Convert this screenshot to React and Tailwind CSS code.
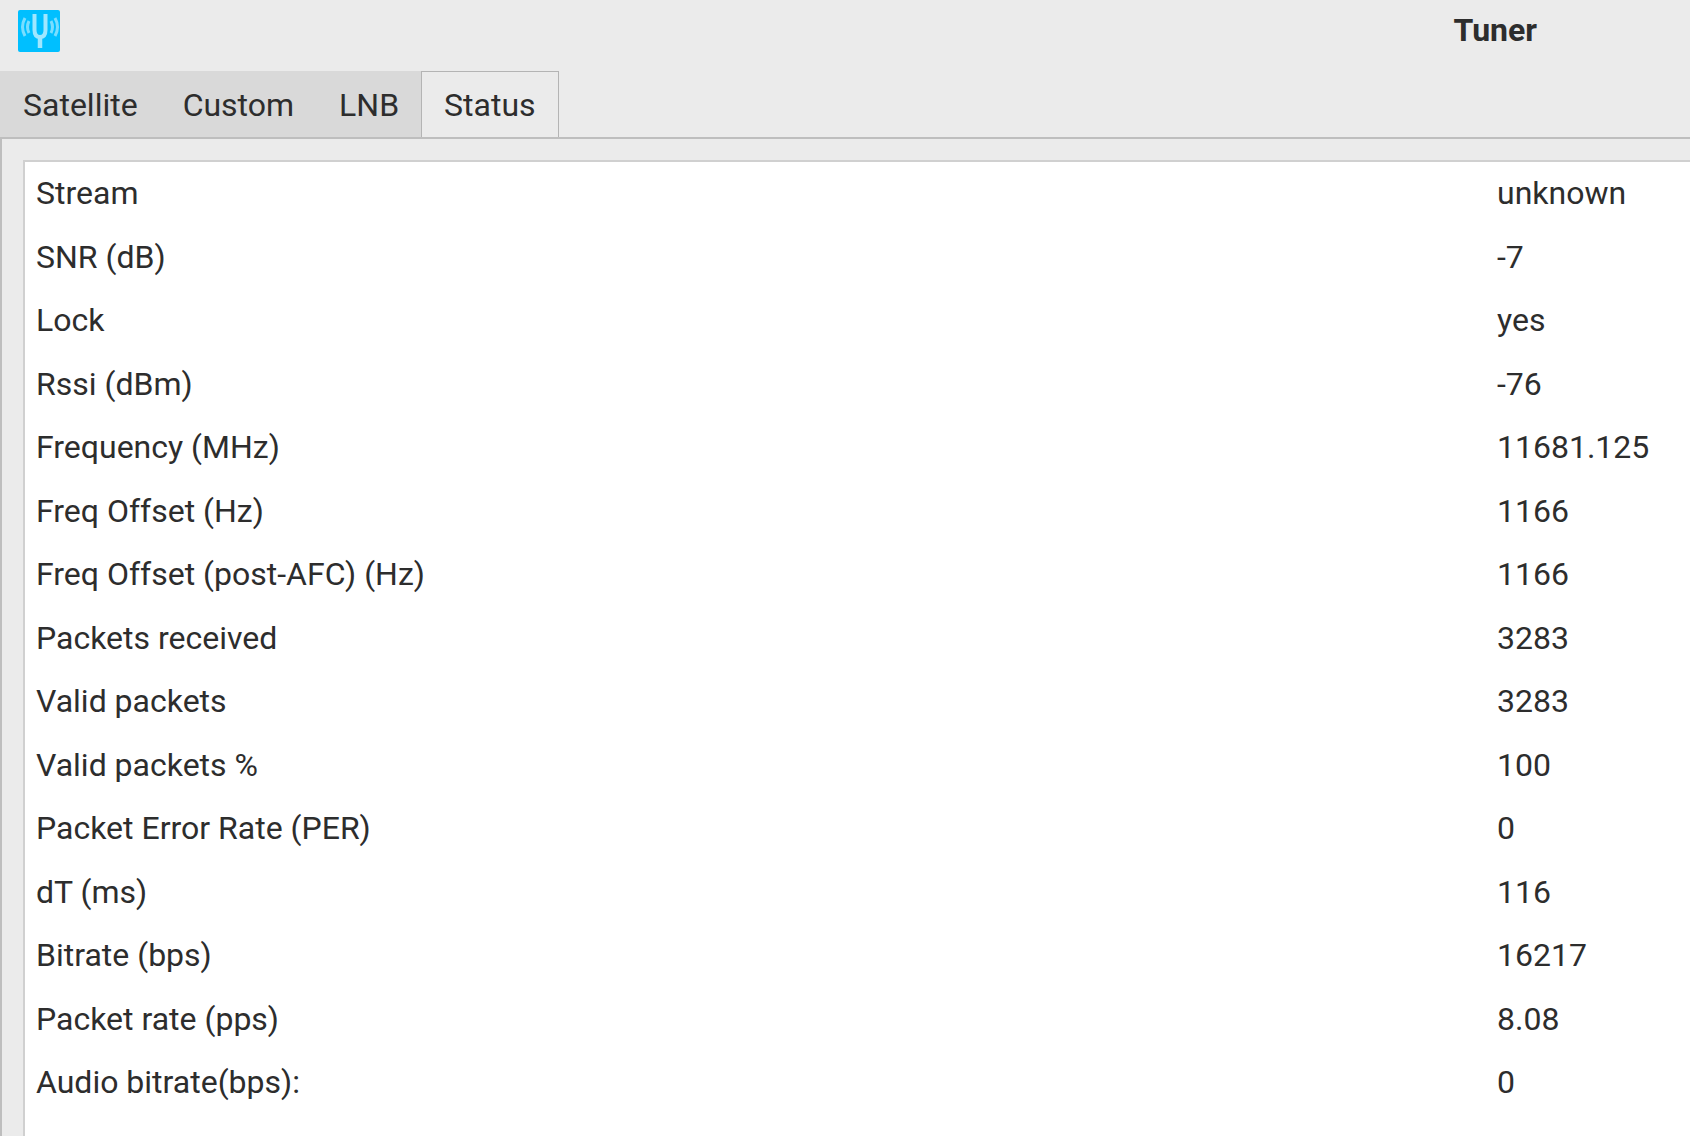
import React, { useState } from 'react';

const tabs = ['Satellite', 'Custom', 'LNB', 'Status'];

const rows = [
  ['Stream', 'unknown'],
  ['SNR (dB)', '-7'],
  ['Lock', 'yes'],
  ['Rssi (dBm)', '-76'],
  ['Frequency (MHz)', '11681.125'],
  ['Freq Offset (Hz)', '1166'],
  ['Freq Offset (post-AFC) (Hz)', '1166'],
  ['Packets received', '3283'],
  ['Valid packets', '3283'],
  ['Valid packets %', '100'],
  ['Packet Error Rate (PER)', '0'],
  ['dT (ms)', '116'],
  ['Bitrate (bps)', '16217'],
  ['Packet rate (pps)', '8.08'],
  ['Audio bitrate(bps):', '0'],
];

const TunerIcon = () => (
  <svg viewBox="0 0 42 42" className="w-[42px] h-[42px]" fill="none" aria-hidden="true">
    <rect width="42" height="42" rx="2" fill="#00bfff" />
    {/* sound waves */}
    <path d="M11 11q-3 6 0 12M33 11q3 6 0 12" stroke="#7adeff" strokeWidth="3" />
    <path d="M7 8q-5 9 0 18M37 8q5 9 0 18" stroke="#7adeff" strokeWidth="3" />
    {/* fork */}
    <path d="M16.500 4v16q0 7 5.500 7t5.500-7V4" stroke="#a0e7ff" strokeWidth="4" />
    <path d="M22 27v11" stroke="#a0e7ff" strokeWidth="4.500" />
  </svg>
);

const TitleBar = () => (
  <header className="flex items-center justify-between h-[71px] pl-[18px] pr-[153px] pb-[9px]">
    <TunerIcon />
    <h1 className="pb-0.5 font-bold">Tuner</h1>
  </header>
);

const TabBar = ({ active, onSelect }) => (
  <div role="tablist" className="flex h-[66px]">
    {tabs.map((tab) => (
      <button
        key={tab}
        type="button"
        role="tab"
        aria-selected={tab === active}
        onClick={() => onSelect(tab)}
        className={
          tab === active
            ? 'px-[22px] border border-b-0 border-[#b4b4b4] bg-[#ebebeb]'
            : 'pl-[23px] pr-[22px] pt-px bg-[#d9d9d9]'
        }
      >
        {tab}
      </button>
    ))}
  </div>
);

const StatusTable = () => (
  <table className="w-full table-fixed text-left">
    <tbody>
      {rows.map(([label, value]) => (
        <tr key={label} className="odd:h-16 even:h-[63px]">
          <th scope="row" className="pl-[11px] pb-0.5 font-normal">{label}</th>
          <td className="w-[193px] pb-0.5">{value}</td>
        </tr>
      ))}
    </tbody>
  </table>
);

export default function App() {
  const [active, setActive] = useState('Status');

  return (
    <div className="flex flex-col min-h-screen overflow-hidden bg-[#ebebeb] text-[#2d2d2d] text-[32px] leading-10 font-[Roboto,sans-serif]">
      <TitleBar />
      <TabBar active={active} onSelect={setActive} />
      <main className="flex flex-col grow border-t-2 border-l-2 border-[#bebebe] pt-[21px] pl-[21px]">
        <section className="grow bg-white border-t-2 border-l-2 border-[#d0d0d0]">
          {active === 'Status' && <StatusTable />}
        </section>
      </main>
    </div>
  );
}
